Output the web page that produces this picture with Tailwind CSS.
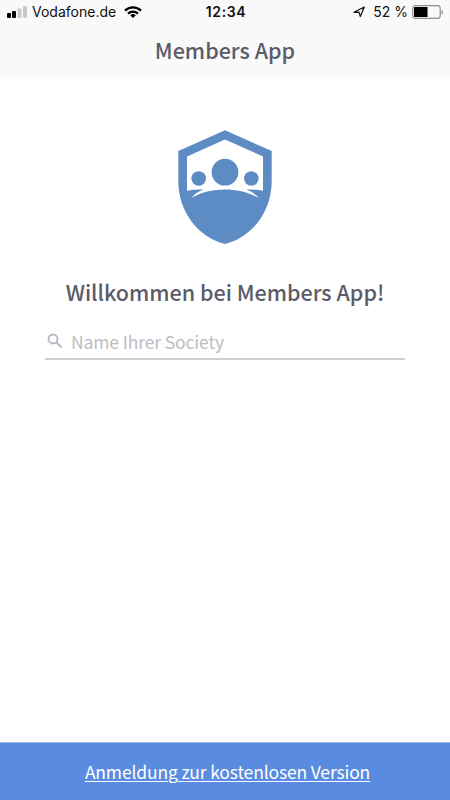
<!DOCTYPE html>
<html lang="de">
<head>
    <meta charset="UTF-8">
    <meta name="viewport" content="width=device-width, initial-scale=1.0">
    <script src="https://cdn.jsdelivr.net/npm/@tailwindcss/browser@4"></script>
    <title>Members App</title>
</head>
<body class="bg-white">
    <div class="h-screen flex flex-col overflow-hidden font-['Noto_Sans_CJK_SC','Noto_Sans',sans-serif] text-[#5b5b69]">
        <header class="h-[77px] shrink-0 bg-[#f9f9f9]">
            <!-- status bar -->
            <div class="h-6 grid grid-cols-[1fr_auto_1fr] items-center pl-[7px] pr-[6px] font-[Inter,sans-serif] text-[#111] text-sm leading-6 whitespace-nowrap">
                <div class="flex items-center">
                    <svg class="w-5 h-3" viewBox="0 0 20 12">
                        <rect x="0" y="7" width="4" height="5" rx="1" />
                        <rect x="5" y="5" width="4" height="7" rx="1" />
                        <rect x="10.500" y="2.500" width="4" height="9.500" rx="1" fill="#c8c8c8" />
                        <rect x="16" y="0" width="4" height="12" rx="1" fill="#c8c8c8" />
                    </svg>
                    <span class="ml-[5px]">Vodafone.de</span>
                    <svg class="ml-2 w-[18px] h-3" viewBox="0 0 18 12" fill="none" stroke="#000" stroke-width="2.200">
                        <path d="M1 4.600a11.300 11.300 0 0 1 16 0" />
                        <path d="M4 7.600a7.100 7.100 0 0 1 10 0" />
                        <path d="M9 12 6.200 9.300a4 4 0 0 1 5.600 0z" fill="#000" stroke="none" />
                    </svg>
                </div>
                <span class="pl-px font-semibold tracking-[0.600px]">12:34</span>
                <div class="flex items-center justify-end">
                    <svg class="w-3 h-3 mr-2" viewBox="0 0 12 12" fill="none" stroke="#111" stroke-width="1.200" stroke-linejoin="round">
                        <path d="M11.300 1 1 6.300 6 6.200 7.300 10.500z" />
                    </svg>
                    <span>52 %</span>
                    <svg class="ml-1 w-8 h-[14px]" viewBox="0 0 32 14">
                        <rect x="0.700" y="0.700" width="27.500" height="12.600" rx="2.500" fill="none" stroke="#909090" stroke-width="1.200" />
                        <rect x="2" y="2" width="13.500" height="10" rx="0.500" />
                        <path d="M29.500 5v4.500q1.500-.6 1.500-2.250T29.500 5z" fill="#909090" />
                    </svg>
                </div>
            </div>
            <h1 class="pt-3 text-[21.500px] leading-7 font-medium text-center">Members App</h1>
        </header>
        <main class="grow flex flex-col items-center pt-[53px]">
            <svg class="w-[94px] h-[114px]" viewBox="178 130 94 114" fill="#5d8cc5">
                <path d="M225 130.300 271.700 151v30c0 30-19 56-46.700 63-27.700-7-46.700-33-46.700-63v-30z" />
                <path fill="#fff" d="M225 139.500 263 156.500v34.300q-8-1.700-16.500-1.200 8 3 12 8.400C240 186.700 210 186.700 191.500 198q4-5.400 12-8.400-8.500-.5-16.500 1.200v-34.300z" />
                <circle cx="225" cy="172.200" r="13.400" />
                <circle cx="198.700" cy="178.500" r="7.300" />
                <circle cx="251.300" cy="178.500" r="7.300" />
            </svg>
            <h2 class="mt-8 text-[21.500px] leading-8 font-medium">Willkommen bei Members App!</h2>
            <label class="mt-4 w-[360px] h-[36px] flex items-center border-b-2 border-[#cdcdd3]">
                <svg class="ml-0.5 w-4 h-4" viewBox="0 0 16 16" fill="none" stroke="#b5b6c0" stroke-width="1.900">
                    <circle cx="6" cy="6" r="4.500" />
                    <path d="m9.300 9.300 5.200 5.200" />
                </svg>
                <input type="text" placeholder="Name Ihrer Society" class="ml-2 mt-0.5 grow text-[17.500px] leading-7 tracking-[-0.120px] outline-none placeholder:text-[#bbbcc5]">
            </label>
        </main>
        <footer class="h-[58px] shrink-0 flex items-center justify-center pl-[5px] bg-[#598be0] border-t border-[#9db7e3]">
            <a href="#" class="text-[17.500px] leading-7 tracking-[-0.160px] text-white underline decoration-1 underline-offset-2">Anmeldung zur kostenlosen Version</a>
        </footer>
    </div>
</body>
</html>
